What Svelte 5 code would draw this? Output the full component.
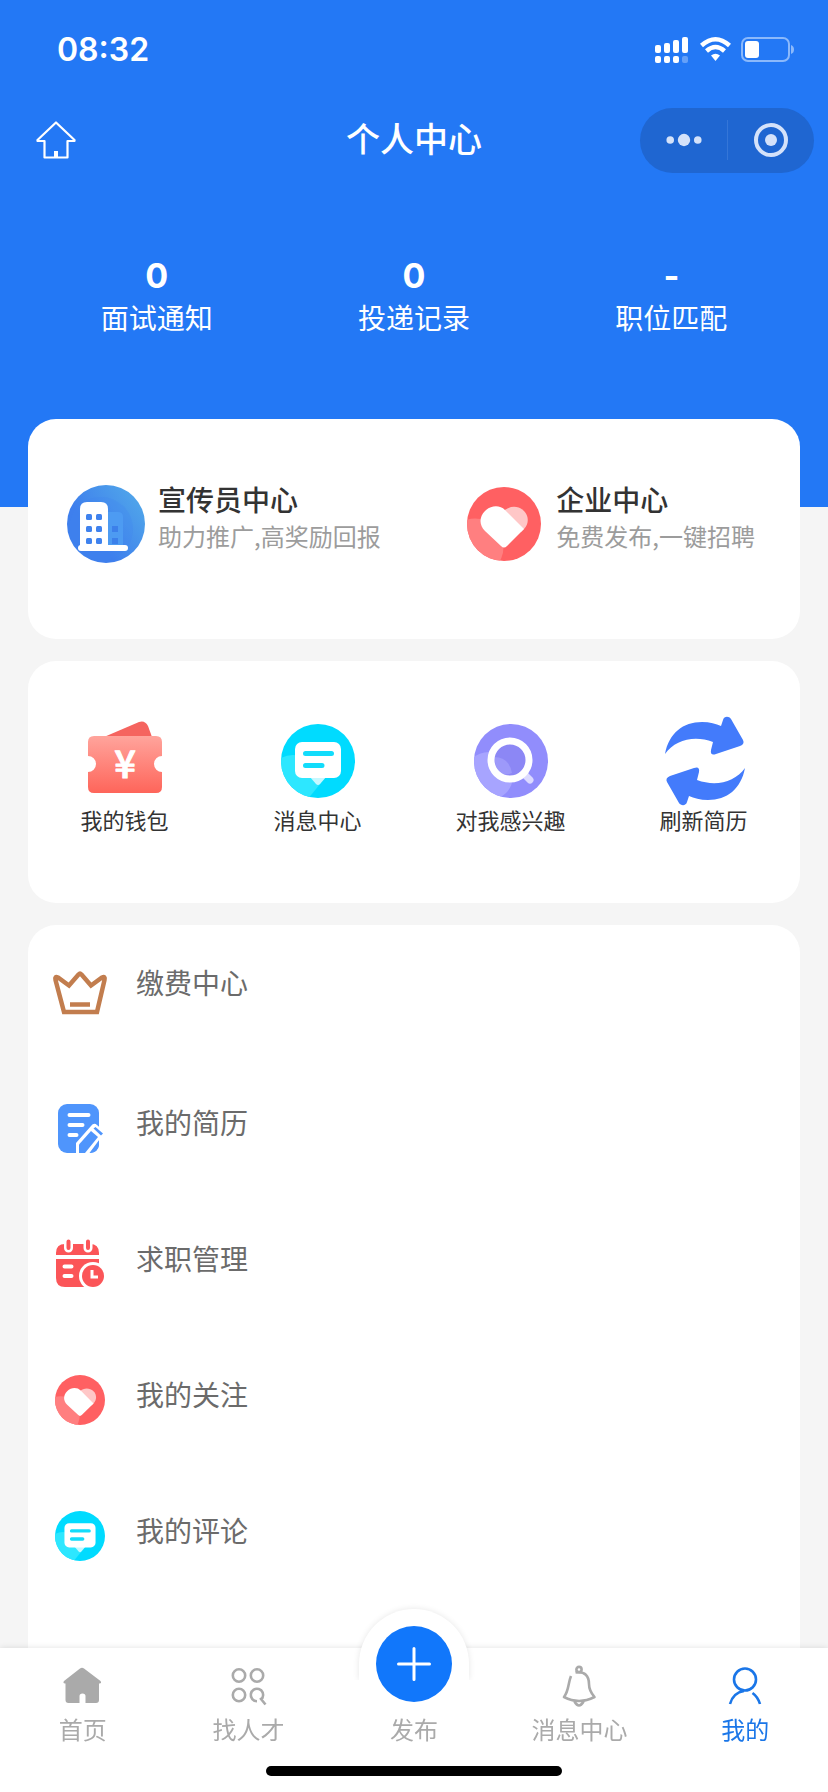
<script>
  const stats = [
    { value: '0', label: '面试通知' },
    { value: '0', label: '投递记录' },
    { value: '-', label: '职位匹配' }
  ];
  const centers = [
    { icon: 'building', title: '宣传员中心', note: '助力推广,高奖励回报' },
    { icon: 'heart', title: '企业中心', note: '免费发布,一键招聘' }
  ];
  const shortcuts = [
    { icon: 'wallet', label: '我的钱包' },
    { icon: 'chat', label: '消息中心' },
    { icon: 'search', label: '对我感兴趣' },
    { icon: 'refresh', label: '刷新简历' }
  ];
  const menu = [
    { icon: 'crown', label: '缴费中心' },
    { icon: 'resume', label: '我的简历' },
    { icon: 'calendar', label: '求职管理' },
    { icon: 'heart', label: '我的关注' },
    { icon: 'chat', label: '我的评论' }
  ];
  const tabs = [
    { icon: 'home', label: '首页' },
    { icon: 'talent', label: '找人才' },
    { icon: 'publish', label: '发布' },
    { icon: 'bell', label: '消息中心' },
    { icon: 'user', label: '我的', active: true }
  ];
</script>

{#snippet badge(name, uid)}
  {#if name === 'building'}
    <svg class="wide" viewBox="0 0 78 78" aria-hidden="true">
      <defs>
        <linearGradient id="sky" x1="0.1" y1="0.8" x2="0.9" y2="0.2">
          <stop offset="0.3" stop-color="#3e7fed" />
          <stop offset="1" stop-color="#4fa3ea" />
        </linearGradient>
      </defs>
      <circle cx="39" cy="39" r="39" fill="url(#sky)" />
      <circle cx="34" cy="44" r="32" fill="#3f82f0" opacity="0.25" />
      <path d="M38 27h13q5 0 5 5v29H38z" fill="#4d9bf2" />
      <path d="M45 41h6v6h-6zM45 53h6v6h-6z" fill="#3c80ea" />
      <path d="M13 62V24q0-7 7-7h14q7 0 7 7v38z" fill="#fff" />
      <rect x="11" y="60" width="50" height="6" rx="3" fill="#fff" />
      <g fill="#3f82ee">
        {#each [29, 41, 53] as y}
          <rect x="19" {y} width="6" height="6" rx="1.5" />
          <rect x="29" {y} width="6" height="6" rx="1.5" />
        {/each}
      </g>
    </svg>
  {:else if name === 'heart'}
    <svg viewBox="0 0 74 74" aria-hidden="true">
      <clipPath id={'heart-' + uid}><circle cx="37" cy="37" r="37" /></clipPath>
      <circle cx="37" cy="37" r="37" fill="#ff6062" />
      <circle cx="8" cy="60" r="28.500" fill="#ff7f80" clip-path={'url(#heart-' + uid + ')'} />
      <path d="M37 24C42 19 51 18 57 24C62 29 62 37 57 42L54 45Z" fill="#ffc7c7" />
      <path d="M18 24C24 18 33 18 38 23L57 42L40 59Q37 62 34 59L18 44C12 38 12 30 18 24Z" fill="#fff" />
    </svg>
  {:else if name === 'chat'}
    <svg viewBox="0 0 74 74" aria-hidden="true">
      <clipPath id={'chat-' + uid}><circle cx="37" cy="37" r="37" /></clipPath>
      <circle cx="37" cy="37" r="37" fill="#00dbff" />
      <path d="M0 34Q14 27 26 36L44 54L26 76H0Z" fill="#2de7ff" clip-path={'url(#chat-' + uid + ')'} />
      <path d="M29 53H45L39 60Q37 62 35 60Z" fill="#c6f8ff" />
      <rect x="14" y="18" width="46" height="36" rx="7" fill="#fff" />
      <path d="M24.500 29.500H50.500M24.500 41.500H41" stroke="#12dcfb" stroke-width="5" stroke-linecap="round" />
    </svg>
  {:else if name === 'wallet'}
    <svg viewBox="0 0 74 74" aria-hidden="true">
      <defs>
        <linearGradient id="ticket" x1="0" y1="0" x2="0" y2="1">
          <stop offset="0" stop-color="#ffa49c" />
          <stop offset="1" stop-color="#fe655a" />
        </linearGradient>
      </defs>
      <path d="M16 13L51-2Q57-4 60 2L64 13Z" fill="#f5645f" />
      <path d="M6 12H68Q74 12 74 18V32A8 8 0 0 0 74 48V63Q74 69 68 69H6Q0 69 0 63V48A8 8 0 0 0 0 32V18Q0 12 6 12Z" fill="url(#ticket)" />
      <text class="yen" x="37" y="54" text-anchor="middle">¥</text>
    </svg>
  {:else if name === 'search'}
    <svg viewBox="0 0 74 74" aria-hidden="true">
      <clipPath id="lens"><circle cx="37" cy="37" r="37" /></clipPath>
      <circle cx="37" cy="37" r="37" fill="#918dfc" />
      <circle cx="15" cy="52" r="24" fill="#a7a4ff" clip-path="url(#lens)" />
      <circle cx="36" cy="36" r="16" fill="#8c87f5" />
      <path d="M20 33Q35 33 38 49Q28 54 22 43Z" fill="#9d99fa" />
      <path d="M51 51L56 56" stroke="#dcdaff" stroke-width="7" stroke-linecap="round" />
      <circle cx="36" cy="36" r="19" fill="none" stroke="#fff" stroke-width="7" />
    </svg>
  {:else if name === 'refresh'}
    <svg viewBox="0 0 74 74" aria-hidden="true">
      <g fill="#437bfb">
        <path id="sweep" d="M-2 30C2 9 16-2 35-2C43-2 49 0 54 2L56-4C57-8 62-8 64-5L76 16Q78 20 73 22L49 30Q43 32 44 26L46 18C27 11 8 16-2 30Z" />
        <use href="#sweep" transform="rotate(180 38 37)" />
      </g>
    </svg>
  {:else if name === 'crown'}
    <svg class="crown" viewBox="0 0 54 54" aria-hidden="true">
      <path d="M2.500 17Q1.500 13 5 14.500L16 22.500L25.500 11.500Q27 10 28.500 11.500L38 22.500L49 14.500Q52.500 13 51.500 17L44 49H11Z" fill="none" stroke="#c27d4e" stroke-width="4.500" />
      <path d="M17 41.500H37" stroke="#c27d4e" stroke-width="4.500" />
    </svg>
  {:else if name === 'resume'}
    <svg viewBox="0 0 50 50" aria-hidden="true">
      <rect x="3" y="1" width="41" height="49" rx="9" fill="#4f95fc" />
      <path d="M14.500 12H33.500M14.500 22H27.500M14.500 32H21.500" stroke="#fff" stroke-width="4" stroke-linecap="round" />
      <path d="M21 52V40L36 23Q39 19 42 22L50 29L33 52Z" fill="#fff" />
      <path d="M24 50V41.500L36 28L43 34L30 50Z" fill="#4f95fc" />
      <path d="M38.500 25.500L40.500 24L48 30.500L46 32.500Z" fill="#4f95fc" />
      <path d="M35 50L44 39V42Q43.500 49 35 50Z" fill="#4f95fc" />
    </svg>
  {:else if name === 'calendar'}
    <svg viewBox="0 0 50 50" aria-hidden="true">
      <path d="M1 16V14Q1 5 10 5H35Q44 5 44 14V16ZM1 20H44V48H10Q1 48 1 39Z" fill="#fb5558" />
      <path d="M13.500 3V9M33 3V9" stroke="#fff" stroke-width="9" stroke-linecap="round" />
      <path d="M13.500 2.500V9M33 2.500V9" stroke="#fb5558" stroke-width="4" stroke-linecap="round" />
      <path d="M9.500 27.500H16.500M9.500 37H16.500" stroke="#fff" stroke-width="4" stroke-linecap="round" />
      <circle cx="38" cy="37" r="14" fill="#fff" />
      <circle cx="38" cy="37" r="11" fill="#fb5558" />
      <path d="M37 31V38H43" fill="none" stroke="#fff" stroke-width="3" />
    </svg>
  {/if}
{/snippet}

{#snippet glyph(name)}
  <svg viewBox="0 0 40 40" aria-hidden="true" fill="none" stroke="currentColor" stroke-width="2.600">
    {#if name === 'home'}
      <path d="M17 2.500Q19 1 21 2.500L37.500 15Q39 17 36.500 17.500H36V34Q36 37 33 37H22.500V30Q22.500 27.500 19.500 27.500Q16.500 27.500 16.500 30V37H5.500Q2.500 37 2.500 34V17.500H2Q-0.500 17 1 15Z" fill="currentColor" stroke="none" />
    {:else if name === 'talent'}
      <circle cx="11" cy="9.500" r="6.200" />
      <circle cx="29" cy="9.500" r="6.200" />
      <circle cx="11" cy="29" r="6.200" />
      <path d="M29 35.200A6.200 6.200 0 1 1 34.500 31.800L33 33L37.500 38.500" />
    {:else if name === 'bell'}
      <circle cx="19" cy="3.500" r="2.600" />
      <path d="M15.500 6.500C25 5 29 10 29 18C29 23 31 27 34.500 31Q19 39 4 31C9 25 8 17 11 10" stroke-linejoin="round" />
      <path d="M14.500 35.500Q19 43.500 23.500 35.500" />
    {:else if name === 'user'}
      <circle cx="20" cy="13.500" r="11" />
      <path d="M5 38C7 31 12 26 19 25M27.500 27C31 29.500 33.500 33 35 38" />
    {/if}
  </svg>
{/snippet}

<div class="page">
  <header>
    <div class="status">
      <time>08:32</time>
      <svg class="signals" viewBox="0 0 139 26" aria-label="信号与电量">
        <g fill="#fff">
          <rect x="0" y="8" width="6" height="8" rx="2" />
          <rect x="9" y="6" width="6" height="10" rx="2" />
          <rect x="18" y="3" width="6" height="13" rx="2" />
          <rect x="27" y="0" width="6" height="16" rx="2" />
          <rect x="0" y="19" width="6" height="7" rx="2" />
          <rect x="9" y="19" width="6" height="7" rx="2" />
          <rect x="18" y="19" width="6" height="7" rx="2" />
          <rect x="27" y="19" width="6" height="7" rx="2" opacity="0.300" />
          <path d="M56 18.500Q60.500 15 65 18.500L60.500 24Z" />
        </g>
        <path d="M46.500 8.500Q60.500-4 74.500 8.500M51.500 14Q60.500 6 69.500 14" fill="none" stroke="#fff" stroke-width="4.500" />
        <rect x="87" y="1" width="47" height="23" rx="6" fill="none" stroke="#8bb9fb" stroke-width="2" />
        <rect x="90" y="4" width="14" height="17" rx="3" fill="#fff" />
        <path d="M136 8Q139 9 139 12.500Q139 16 136 17Z" fill="#8bb9fb" />
      </svg>
    </div>

    <div class="navbar">
      <button class="home" aria-label="返回首页">
        <svg viewBox="0 0 40 40" fill="none" stroke="#fff" stroke-width="2.200" stroke-linejoin="round" aria-hidden="true">
          <path d="M20 2.500L1.500 20V21H8.500V37.500H31.500V21H38.500V20Z" />
          <path d="M20 31V37" stroke-width="4" />
        </svg>
      </button>
      <h1>个人中心</h1>
      <div class="capsule">
        <button aria-label="更多">
          <svg viewBox="0 0 40 40" fill="#d4e2fa" aria-hidden="true">
            <circle cx="5.500" cy="20" r="4" /><circle cx="20" cy="20" r="6.500" /><circle cx="34.500" cy="20" r="4" />
          </svg>
        </button>
        <button aria-label="关闭">
          <svg viewBox="0 0 40 40" aria-hidden="true">
            <circle cx="20" cy="20" r="15" fill="none" stroke="#d4e2fa" stroke-width="4" />
            <circle cx="20" cy="20" r="6" fill="#d4e2fa" />
          </svg>
        </button>
      </div>
    </div>

    <ul class="stats">
      {#each stats as item}
        <li><strong>{item.value}</strong><span>{item.label}</span></li>
      {/each}
    </ul>
  </header>

  <main>
    <section class="card centers">
      {#each centers as item}
        <button>
          <span class="slot">{@render badge(item.icon, 'center')}</span>
          <span class="words"><strong>{item.title}</strong><small>{item.note}</small></span>
        </button>
      {/each}
    </section>

    <section class="card shortcuts">
      {#each shortcuts as item}
        <button>{@render badge(item.icon, 'short')}<span>{item.label}</span></button>
      {/each}
    </section>

    <ul class="card menu">
      {#each menu as item}
        <li>
          <button><span class="mark">{@render badge(item.icon, 'menu')}</span><span>{item.label}</span></button>
        </li>
      {/each}
      <li>
        <span class="mark">
          <svg viewBox="0 0 50 50" aria-hidden="true"><circle cx="25" cy="26" r="25" fill="#aaa" /></svg>
        </span>
      </li>
    </ul>
  </main>

  <nav>
    <ul>
      {#each tabs as tab}
        <li>
          <button class:active={tab.active}>
            {#if tab.icon === 'publish'}
              <span class="dome"></span>
              <span class="plus">
                <svg viewBox="0 0 40 40" stroke="#fff" stroke-width="3" stroke-linecap="round" aria-hidden="true">
                  <path d="M4.500 20H35.500M20 4.500V35.500" />
                </svg>
              </span>
            {:else}
              {@render glyph(tab.icon)}
            {/if}
            <span class="name">{tab.label}</span>
          </button>
        </li>
      {/each}
    </ul>
    <div class="indicator"></div>
  </nav>
</div>

<style>
  :global(body) {
    margin: 0;
    background: #f5f5f5;
  }
  .page {
    font-family: 'Noto Sans CJK SC', sans-serif;
    color: #333;
  }
  ul {
    list-style: none;
    margin: 0;
    padding: 0;
  }
  button {
    border: 0;
    padding: 0;
    background: none;
    font: inherit;
    color: inherit;
    text-align: left;
    cursor: pointer;
  }
  svg {
    display: block;
    overflow: visible;
    flex: none;
  }
  header {
    background: #2378f5;
    color: #fff;
    padding-bottom: 170px;
  }
  .status {
    display: flex;
    justify-content: space-between;
    align-items: center;
    height: 100px;
    padding: 0 34px 0 57px;
  }
  time {
    font: 600 32px/40px Inter, sans-serif;
  }
  .signals {
    width: 139px;
    height: 26px;
  }
  .navbar {
    display: grid;
    grid-template-columns: 1fr auto 1fr;
    align-items: center;
    height: 80px;
    padding: 0 14px;
  }
  .home {
    justify-self: start;
    margin-left: 22px;
  }
  .home svg,
  .capsule svg {
    width: 40px;
    height: 40px;
  }
  h1 {
    margin: 0;
    padding-bottom: 4px;
    font-size: 34px;
    line-height: 48px;
    font-weight: 500;
  }
  .capsule {
    justify-self: end;
    display: grid;
    grid-template-columns: 1fr 1fr;
    align-items: center;
    width: 174px;
    height: 65px;
    border-radius: 33px;
    background: #1f66d1;
  }
  .capsule button {
    display: grid;
    place-items: center;
    height: 40px;
  }
  .capsule button + button {
    border-left: 1px solid #3576d8;
  }
  .capsule button:first-child svg {
    width: 38px;
  }
  .stats {
    display: grid;
    grid-template-columns: repeat(3, 1fr);
    padding: 76px 28px 0;
  }
  .stats li {
    display: grid;
    gap: 1px;
    text-align: center;
    line-height: 40px;
  }
  .stats strong {
    font-family: Inter, sans-serif;
    font-size: 34px;
    font-weight: 700;
  }
  .stats span {
    font-size: 28px;
  }
  main {
    display: grid;
    gap: 22px;
    margin-top: -88px;
    padding: 0 28px;
  }
  .card {
    background: #fff;
    border-radius: 28px;
  }
  .centers {
    display: flex;
    justify-content: space-between;
    padding: 61px 45px 72px 39px;
  }
  .centers button {
    display: flex;
    align-items: center;
    gap: 13px;
  }
  .slot {
    display: grid;
    place-items: center;
    width: 78px;
    height: 87px;
  }
  .slot svg,
  .shortcuts svg {
    width: 74px;
    height: 74px;
  }
  .slot .wide {
    width: 78px;
    height: 78px;
  }
  .words {
    display: grid;
    align-self: start;
  }
  .words strong {
    font-size: 28px;
    line-height: 38px;
    font-weight: 500;
  }
  .words small {
    font-size: 24px;
    line-height: 36px;
    color: #9c9c9c;
  }
  .shortcuts {
    display: grid;
    grid-template-columns: repeat(4, 1fr);
    padding: 63px 0 68px;
  }
  .shortcuts button {
    display: grid;
    justify-items: center;
    gap: 5px;
    font-size: 22px;
    line-height: 32px;
  }
  .yen {
    font-family: 'Noto Sans CJK SC', sans-serif;
    font-size: 38px;
    font-weight: 500;
    fill: #fff;
    stroke: #fff;
    stroke-width: 1px;
    stroke-linejoin: round;
  }
  .menu {
    padding: 38px 22px 0;
  }
  .menu li {
    padding-bottom: 86px;
  }
  .menu button {
    display: flex;
    align-items: flex-start;
    gap: 26px;
    width: 100%;
    font-size: 28px;
    line-height: 38px;
    color: #6b6b6b;
  }
  .mark {
    display: grid;
    justify-items: center;
    width: 60px;
  }
  .mark svg {
    width: 50px;
    height: 50px;
  }
  .mark .crown {
    width: 54px;
    height: 54px;
  }
  nav {
    position: fixed;
    left: 0;
    right: 0;
    bottom: 0;
    background: #fff;
    box-shadow: 0 0 6px rgba(0, 0, 0, 0.12);
    padding: 18px 0 16px;
  }
  nav ul {
    display: grid;
    grid-template-columns: repeat(5, 1fr);
  }
  nav button {
    position: relative;
    display: flex;
    flex-direction: column;
    align-items: center;
    justify-content: flex-end;
    gap: 8px;
    width: 100%;
    height: 78px;
    font-size: 24px;
    line-height: 30px;
    color: #aaa;
  }
  nav button.active {
    color: #1a76e8;
  }
  nav svg {
    width: 40px;
    height: 40px;
  }
  .dome {
    position: absolute;
    top: -57px;
    left: calc(50% - 55px);
    width: 110px;
    height: 71px;
    border-radius: 55px 55px 0 0;
    background: #fff;
    box-shadow: 0 0 6px rgba(0, 0, 0, 0.1);
    clip-path: inset(-10px -10px 0 -10px);
  }
  .plus {
    position: absolute;
    top: -40px;
    left: calc(50% - 38px);
    display: grid;
    place-items: center;
    width: 76px;
    height: 76px;
    border-radius: 50%;
    background: #1177fb;
  }
  .name {
    position: relative;
  }
  .indicator {
    width: 296px;
    height: 10px;
    margin: 22px auto 0;
    border-radius: 5px;
    background: #000;
  }
</style>
